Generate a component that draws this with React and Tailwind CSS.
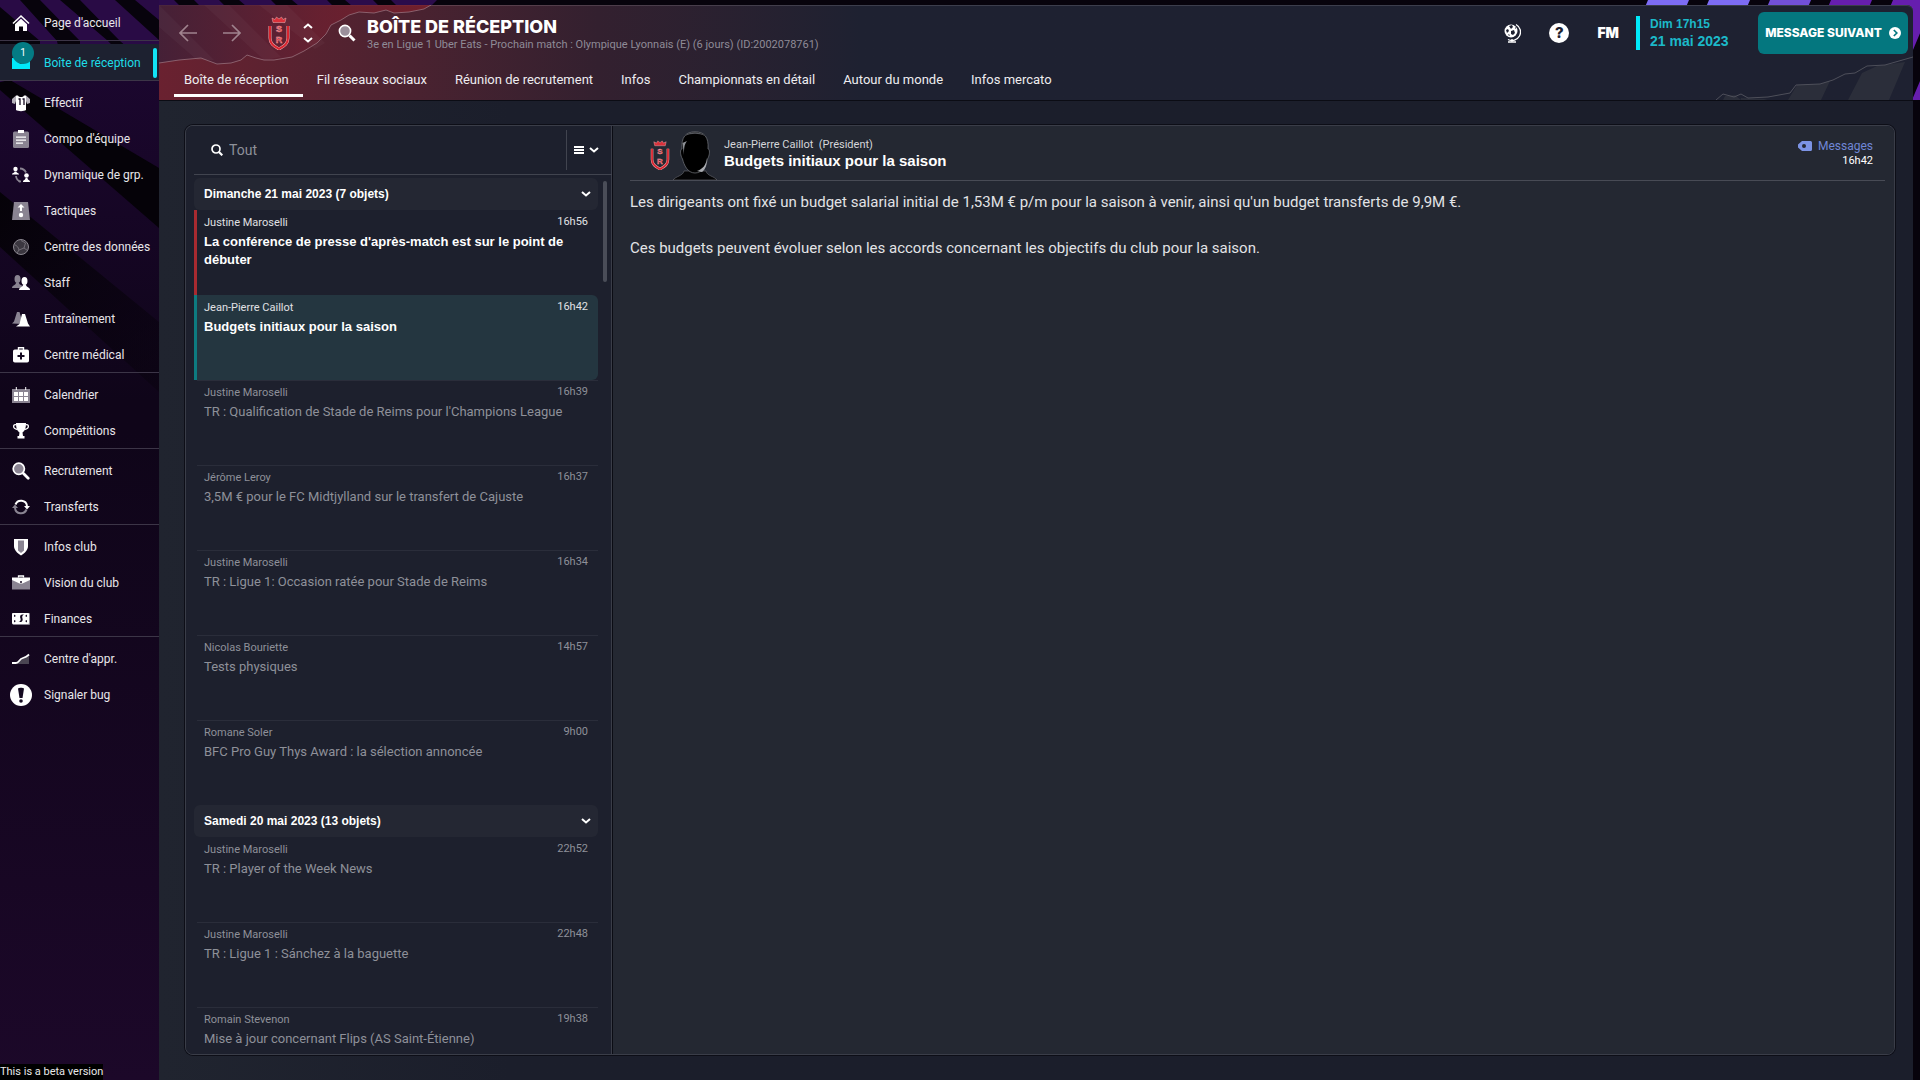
import React, { useState } from 'react';

// ==========================================
// DONNÉES
// ==========================================
const MENU = [
    [{ label: "Page d'accueil", icon: 'home' }],
    [{ label: 'Boîte de réception', icon: 'inbox', badge: 1 }],
    [
        { label: 'Effectif', icon: 'shirt' },
        { label: "Compo d'équipe", icon: 'clipboard' },
        { label: 'Dynamique de grp.', icon: 'dynamics' },
        { label: 'Tactiques', icon: 'tactics' },
        { label: 'Centre des données', icon: 'ball' },
        { label: 'Staff', icon: 'staff' },
        { label: 'Entraînement', icon: 'cones' },
        { label: 'Centre médical', icon: 'medical' },
    ],
    [
        { label: 'Calendrier', icon: 'calendar' },
        { label: 'Compétitions', icon: 'trophy' },
    ],
    [
        { label: 'Recrutement', icon: 'search' },
        { label: 'Transferts', icon: 'transfer' },
    ],
    [
        { label: 'Infos club', icon: 'shield' },
        { label: 'Vision du club', icon: 'briefcase' },
        { label: 'Finances', icon: 'money' },
    ],
    [
        { label: "Centre d'appr.", icon: 'trend' },
        { label: 'Signaler bug', icon: 'bug' },
    ],
];

const TABS = [
    'Boîte de réception',
    'Fil réseaux sociaux',
    'Réunion de recrutement',
    'Infos',
    'Championnats en détail',
    'Autour du monde',
    'Infos mercato',
];

const GROUPS = [
    {
        title: 'Dimanche 21 mai 2023 (7 objets)',
        items: [
            { id: 1, from: 'Justine Maroselli', time: '16h56', subject: "La conférence de presse d'après-match est sur le point de débuter", unread: true, urgent: true },
            { id: 2, from: 'Jean-Pierre Caillot', time: '16h42', subject: 'Budgets initiaux pour la saison', unread: true },
            { id: 3, from: 'Justine Maroselli', time: '16h39', subject: "TR : Qualification de Stade de Reims pour l'Champions League" },
            { id: 4, from: 'Jérôme Leroy', time: '16h37', subject: '3,5M € pour le FC Midtjylland sur le transfert de Cajuste' },
            { id: 5, from: 'Justine Maroselli', time: '16h34', subject: 'TR : Ligue 1: Occasion ratée pour Stade de Reims' },
            { id: 6, from: 'Nicolas Bouriette', time: '14h57', subject: 'Tests physiques' },
            { id: 7, from: 'Romane Soler', time: '9h00', subject: 'BFC Pro Guy Thys Award : la sélection annoncée' },
        ],
    },
    {
        title: 'Samedi 20 mai 2023 (13 objets)',
        items: [
            { id: 8, from: 'Justine Maroselli', time: '22h52', subject: 'TR : Player of the Week News' },
            { id: 9, from: 'Justine Maroselli', time: '22h48', subject: 'TR : Ligue 1 : Sánchez à la baguette' },
            { id: 10, from: 'Romain Stevenon', time: '19h38', subject: 'Mise à jour concernant Flips (AS Saint-Étienne)' },
        ],
    },
];

// ==========================================
// ICÔNES
// ==========================================
const G = '#8a8492';

const ICONS = {
    home: (
        <>
            <path d="M1 9.5 9 2l8 7.5" fill="none" stroke="#fff" strokeWidth="1.6" />
            <path d="M3 10.2 9 4.8l6 5.4V17h-4v-4.5H7V17H3z" fill="#fff" />
        </>
    ),
    inbox: <path d="M0 4h4.5l1.5 4.5 3 1.5 3-1.5L13.500 4H18v11H0z" fill="#00e9fa" />,
    shirt: (
        <>
            <path d="M4 1.500 0 5v4l3 1 1-3zM14 1.500 18 5v4l-3 1-1-3z" fill="#b5b0ba" />
            <path d="M4 1.500h2c1 2 5 2 6 0h2V16c-2 1.500-8 1.500-10 0z" fill="#fff" />
            <path d="M6.500 5h1.500v6M10.500 5H12v6" fill="none" stroke="#140920" strokeWidth="1.300" />
        </>
    ),
    clipboard: (
        <>
            <rect x="1" y="1.500" width="16" height="16.500" rx="1.500" fill={G} />
            <path d="M6 0h6v3H6zM4 6.500h10v1.200H4zM4 9.500h10v1.200H4zM4 12.500h7v1.200H4z" fill="#fff" />
        </>
    ),
    dynamics: (
        <>
            <path d="M8 2.500a7 7 0 0 1 6 4M6.500 14.500 8 16M4 10a6 6 0 0 0 5 5.500" fill="none" stroke={G} strokeWidth="1.800" />
            <circle cx="3.500" cy="3" r="2.200" fill="#fff" />
            <path d="M0 8.500c0-2 2.500-1 2.500-3h2c0 2 2.500 1 2.500 3z" fill="#fff" />
            <circle cx="14.500" cy="9.500" r="2.300" fill="#fff" />
            <path d="M11 16c0-2.500 2.500-1.500 2.500-4h2c0 2.500 2.500 1.500 2.500 4z" fill="#fff" />
        </>
    ),
    tactics: (
        <>
            <path d="M2 0h14l2 18H0z" fill={G} />
            <path d="M9 2 5.500 5.500H8V9h2V5.500h2.500z" fill="#fff" />
            <circle cx="9" cy="13" r="2.200" fill="#fff" />
        </>
    ),
    ball: (
        <>
            <circle cx="9" cy="9" r="7.500" fill="#3b3740" stroke="#8b8790" strokeWidth="1" />
            <path d="M2.500 6.500C5 8 6.500 9 7 12l-2 3M7 12l5-2 1.500-5L9 2.500M12 10l3.500 2.500" fill="none" stroke="#77737c" strokeWidth="0.900" />
        </>
    ),
    staff: (
        <>
            <ellipse cx="5.500" cy="5" rx="3" ry="4" fill={G} />
            <path d="M0 14c0-3.500 4-2 4-5.500h3c0 3 4 2 4 5.500z" fill={G} />
            <ellipse cx="12.500" cy="7" rx="3" ry="4" fill="#fff" />
            <path d="M7 16c0-3.500 4-2 4-5.500h3c0 3.500 4 2 4 5.500z" fill="#fff" />
        </>
    ),
    cones: (
        <>
            <path d="M0 13.500 2 11.500 5 2h2.500L11 14z" fill={G} />
            <path d="M4 16.500 7.500 14 10 4h3l3 9.500 2 3z" fill="#fff" />
        </>
    ),
    medical: (
        <>
            <rect x="1" y="3.500" width="16" height="13" rx="1.800" fill="#fff" />
            <path d="M6.500 4V1.800h5V4" fill="none" stroke="#fff" strokeWidth="1.400" />
            <path d="M9 6.500v7M5.500 10h7" stroke="#140920" strokeWidth="2" />
        </>
    ),
    calendar: (
        <>
            <path d="M0 3h18v14H0z" fill={G} />
            <path d="M3.800 1h1v3h-1zM13.200 1h1v3h-1zM2 6h4v4H2zM7 6h4v4H7zM12 6h4v4h-4zM2 11h4v4H2zM7 11h4v4H7zM12 11h4v4h-4z" fill="#fff" />
        </>
    ),
    trophy: (
        <>
            <path d="M4 1h10c0 5-1 8-3.500 9.500L11 14h1.500v2.500h-7V14H7l.5-3.500C5 9 4 6 4 1z" fill="#fff" />
            <path d="M4.500 2.800C1 1.500 0 6.500 5.500 7.500M13.500 2.800C17 1.500 18 6.500 12.500 7.500" fill="none" stroke="#fff" strokeWidth="1.300" />
        </>
    ),
    search: (
        <>
            <circle cx="6.800" cy="6.800" r="5.600" fill={G} stroke="#fff" strokeWidth="1.700" />
            <path d="m11.500 11.500 4.700 4.700" stroke="#fff" strokeWidth="2.800" strokeLinecap="round" />
        </>
    ),
    transfer: (
        <>
            <path d="M3.500 6.500A6 6 0 0 1 15 8" fill="none" stroke="#fff" strokeWidth="2" />
            <path d="M12 8h6l-3 3.500z" fill="#fff" />
            <path d="M14.500 11.500A6 6 0 0 1 3 10" fill="none" stroke={G} strokeWidth="2" />
            <path d="M0 10h6L3 6.500z" fill={G} />
        </>
    ),
    shield: (
        <>
            <path d="M2 1h14v7c0 4-3 7-7 9.500C5 15 2 12 2 8z" fill="#fff" />
            <path d="M6 2.500h6v10L9 15l-3-2.500z" fill={G} />
        </>
    ),
    briefcase: (
        <>
            <path d="M0 6h18v9.500H0z" fill={G} />
            <path d="M0 3.500h18V6L10.500 9.500h-3L0 6z" fill="#fff" />
            <path d="M6.500 3.500V2h5v1.500" fill="none" stroke="#fff" strokeWidth="1.300" />
            <circle cx="9" cy="8" r="1" fill="#140920" />
        </>
    ),
    money: (
        <>
            <rect x="0.500" y="3" width="17.500" height="12" rx="1" fill={G} />
            <rect x="0" y="3" width="17" height="11" rx="1" fill="#fff" />
            <path d="M2 4.500 4 6l-2 1zM2 12.500 4 11l-2-1zM15 4.500 13 6l2 1zM15 12.500 13 11l2-1zM10.500 4.500c-3 0-2.500 3-2 4s0 3-2 3.500h2c2 0 2.500-2 2-3.500s-.5-3 1.500-4z" fill="#140920" />
        </>
    ),
    trend: (
        <>
            <path d="m5 13 5-5 7-2.500V14H5z" fill="#4a4552" />
            <path d="M0 13h4c3 0 3-4 7-5s4-1.500 6-3.500" fill="none" stroke="#fff" strokeWidth="1.800" />
        </>
    ),
};

const MenuIcon = ({ name }) => {
    if (name === 'bug') {
        return (
            <svg viewBox="0 0 22 22" className="h-[22px] w-[22px] shrink-0" aria-hidden="true">
                <circle cx="11" cy="11" r="11" fill="#fff" />
                <path d="M8 4.500c1-1 5-1 6 0L12.500 14h-3z" fill="#140920" />
                <circle cx="11" cy="17" r="1.800" fill="#140920" />
            </svg>
        );
    }
    return <svg viewBox="0 0 18 18" className="h-[18px] w-[18px]" aria-hidden="true">{ICONS[name]}</svg>;
};

const Crest = ({ className }) => (
    <svg viewBox="0 0 22 34" className={className} aria-hidden="true">
        <path d="M5 6.500 4 2l3 1.500L8.500 1 11 3l2.500-2L15 3.500 18 2l-1 4.500z" fill="#d9303a" stroke="#efb4b7" strokeWidth="0.500" />
        <path d="M2 10v12c0 6 4 8 9 11 5-3 9-5 9-11V10" fill="none" stroke="#e9a9ad" strokeWidth="3" />
        <path d="M2 10v12c0 6 4 8 9 11 5-3 9-5 9-11V10" fill="none" stroke="#d9252f" strokeWidth="2" />
        <text x="11" y="16" textAnchor="middle" fontSize="9" fill="#e5323c" stroke="#f0b9bc" strokeWidth="0.400" className="font-['Liberation_Sans',sans-serif] font-bold">S</text>
        <text x="11" y="27" textAnchor="middle" fontSize="9" fill="#e5323c" stroke="#f0b9bc" strokeWidth="0.400" className="font-['Liberation_Sans',sans-serif] font-bold">R</text>
    </svg>
);

const Portrait = () => (
    <svg viewBox="0 0 44 49" className="h-[49px] w-[44px]" aria-hidden="true">
        <path d="M0 49c3-4 10-4 11-9h22c1 5 8 5 11 9z" fill="#040405" stroke="#6b6d74" strokeWidth="0.600" />
        <path d="M9 18C8 6 13 .8 22 .8S36 6 35 18c2 0 2 6-.5 10-1 6-5 14-12.500 14S11 34 9.500 28C7 24 7 18 9 18z" fill="#000" stroke="#777a80" strokeWidth="0.700" />
        <path d="M9.500 12 14 10c-3 4-3 8-3 14z" fill="#8d9096" />
        <path d="M34 27c-1 7-4 11-10 13l5 1c4-3 5-8 5-14z" fill="#a9abb0" />
        <path d="M12 5c4-5 15-5 20 0-6-3-14-3-20 0z" fill="#55575d" />
    </svg>
);

const Chevron = ({ up }) => (
    <svg viewBox="0 0 10 6" className="h-1.5 w-2.5" aria-hidden="true">
        <path d={up ? 'M1 5l4-3.500L9 5' : 'M1 1l4 3.500L9 1'} fill="none" stroke="#fff" strokeWidth="2" />
    </svg>
);

// ==========================================
// FONDS
// ==========================================
const SideBackground = () => (
    <svg viewBox="0 0 159 400" className="pointer-events-none absolute left-0 top-0 h-[400px] w-[159px]" aria-hidden="true">
        <defs>
            <linearGradient id="fade" x1="0" y1="0" x2="0" y2="1">
                <stop offset="0" stopColor="#1e0733" />
                <stop offset="1" stopColor="#0f0519" />
            </linearGradient>
            <linearGradient id="band" x1="0" y1="0" x2="1" y2="1">
                <stop offset="0" stopColor="#050208" />
                <stop offset="1" stopColor="#050208" stopOpacity="0.300" />
            </linearGradient>
        </defs>
        <path d="M0 0h159v400H0z" fill="url(#fade)" />
        <path d="M0 0h159v50L80 80 0 82z" fill="#290b45" />
        <path d="M0 7 40 41v40H22L0 62zM20 0h20l40 41v40H66L57 41zM60 0h20l40 41 39 34v5h-14l-37-39zM115 0h20l24 20v20z" fill="#07030c" />
        <path d="M0 82 10 80l149 88v60L0 90z" fill="#050208" />
        <path d="M0 192l159 130v70L0 247z" fill="url(#band)" />
    </svg>
);

const TopBackground = () => (
    <>
        <svg viewBox="0 0 280 6" className="pointer-events-none absolute left-[159px] top-0 h-1.5 w-[280px]" aria-hidden="true">
            <path d="M0 0h15l6 6H0zM35 0h25l6 6H41zM80 0h32l6 6H87zM133 0h35l6 6h-34zM186 0h28l6 6h-27zM232 0h46l-6 6h-34z" fill="#2b0c4b" />
        </svg>
        <svg viewBox="0 0 300 100" className="pointer-events-none absolute right-0 top-0 h-[100px] w-[300px]" aria-hidden="true">
            <path d="M28 0h41l-42 100h-41zM89 0h41L88 100H47z" fill="#7d6cf4" />
            <path d="M150 0h41l-42 100h-41z" fill="#7250d8" />
            <path d="M211 0h41l-42 100h-41zM273 0h41l-42 100h-41zM334 0h41l-42 100h-41z" fill="#661eae" />
        </svg>
    </>
);

const HeaderBackground = () => (
    <>
        <svg viewBox="0 0 280 95" className="pointer-events-none absolute left-0 top-0 h-[95px] w-[280px]" aria-hidden="true">
            <defs>
                <linearGradient id="torn" x1="0" y1="0" x2="1" y2="0">
                    <stop offset="0" stopColor="#3c2038" stopOpacity="0.800" />
                    <stop offset="0.600" stopColor="#6b2030" stopOpacity="0.800" />
                    <stop offset="1" stopColor="#7c1f2b" stopOpacity="0.800" />
                </linearGradient>
            </defs>
            <path d="M0 58l20-3 22-2 16 6 14-1 10-3 6-5 9 3 8 2h10l18-3 12-6 13-8 9-9 5-9 10-5 8-5 10-3 15 1 12-3 8 3 15-1 15-3 7-4H0z" fill="url(#torn)" />
            <path d="M0 0l55 55H38L0 22zM45 0h25l52 52-17 3zM100 0h28l38 38-10 6z" fill="#fff" fillOpacity="0.030" />
            <path d="M0 58l20-3 22-2 16 6 14-1 10-3 6-5 9 3 8 2h10l18-3 12-6 13-8 9-9 5-9 10-5 8-5 10-3 15 1 12-3 8 3 15-1 15-3 7-4" fill="none" stroke="#a5848f" strokeOpacity="0.700" strokeWidth="0.900" />
        </svg>
        <svg viewBox="0 0 200 45" className="pointer-events-none absolute bottom-0 right-0 h-[45px] w-[200px]" aria-hidden="true">
            <path d="M10 45l2-4 10-1 6 5zM28 43l27 1-4 1H28zM75 45l9-15 23-1 10-3-9 19zM135 45l14-27 15-7 28-4-16 38z" fill="#2b2e3a" />
            <path d="M3 45l7-6 11 3 7-3 7 4 20-1 22-4 6-8 24-1 13-4 12-6 10-1 12-7 18-1 28-8" fill="none" stroke="#53555f" strokeWidth="0.900" />
        </svg>
    </>
);

// ==========================================
// COMPOSANTS
// ==========================================
const Sidebar = () => (
    <aside className="relative w-[159px] shrink-0 bg-linear-to-b from-[#0f0519] from-40% to-[#1c0829]">
        <SideBackground />
        <nav className="relative">
            {MENU.map((section, i) => (
                <ul key={i} className={`pt-[3px] border-t ${i === 0 ? 'border-transparent' : 'border-[#3c3547]'}`}>
                    {section.map(item => {
                        const active = item.icon === 'inbox';
                        return (
                            <li key={item.label}>
                                <a
                                    href="#"
                                    aria-current={active ? 'page' : undefined}
                                    className={`flex h-9 items-center pt-0.5 text-xs leading-4 ${active ? 'bg-[#1d2130] text-[#1fdde8]' : 'text-[#e8e6ea]'}`}
                                >
                                    <span className="relative flex w-11 shrink-0 items-center pl-3">
                                        <span className={item.icon === 'bug' ? '-ml-0.5' : ''}><MenuIcon name={item.icon} /></span>
                                        {item.badge && (
                                            <span className="absolute -top-3 left-3 flex h-[22px] w-[22px] items-center justify-center rounded-full bg-[#047b84] text-[10px] text-white">
                                                {item.badge}
                                            </span>
                                        )}
                                    </span>
                                    <span className="grow whitespace-nowrap">{item.label}</span>
                                    {active && <span className="mr-0.5 h-[30px] w-1 rounded-sm bg-[#12e4f5]"></span>}
                                </a>
                            </li>
                        );
                    })}
                </ul>
            ))}
        </nav>
        <p className="absolute bottom-0 left-0 bg-black text-[11px] leading-4 text-[#e8e8e8] whitespace-nowrap">This is a beta version</p>
    </aside>
);

const Header = () => (
    <header className="relative flex h-[96px] shrink-0 flex-col justify-between overflow-hidden rounded-tr-md border-b border-[#0b0c14] bg-linear-to-r from-[#6a2130] via-[#33202f] via-25% to-[#1e2131] to-40% pb-[3px] shadow-[inset_0_1px_0_#ffffff22]">
        <HeaderBackground />
        <div className="relative flex h-12 shrink-0 items-center pl-5 pr-[5px] pt-2">
            <button type="button" aria-label="Précédent">
                <svg viewBox="0 0 18 18" className="h-[18px] w-[18px]"><path d="M9 1 1 9l8 8M1 9h17" fill="none" stroke="#a0838e" strokeWidth="1.700" /></svg>
            </button>
            <button type="button" aria-label="Suivant" className="ml-[26px]">
                <svg viewBox="0 0 18 18" className="h-[18px] w-[18px]"><path d="m9 1 8 8-8 8M17 9H0" fill="none" stroke="#a0838e" strokeWidth="1.700" /></svg>
            </button>
            <Crest className="ml-[27px] h-[34px] w-[22px]" />
            <button type="button" aria-label="Changer de club" className="ml-[13px] flex flex-col gap-2">
                <Chevron up />
                <Chevron />
            </button>
            <button type="button" aria-label="Rechercher" className="ml-[25px]">
                <svg viewBox="0 0 18 18" className="h-[18px] w-[18px]">
                    <circle cx="7" cy="7" r="5.600" fill="#9b8f9b" stroke="#fff" strokeWidth="1.600" />
                    <path d="m11.500 11.500 5 5" stroke="#fff" strokeWidth="3" />
                </svg>
            </button>
            <div className="ml-[11px] grow pt-1">
                <h1 className="font-['Inter',sans-serif] text-lg font-extrabold leading-5 text-white">BOÎTE DE RÉCEPTION</h1>
                <p className="text-[11px] leading-4 text-[#8f8b97]">3e en Ligue 1 Uber Eats - Prochain match : Olympique Lyonnais (E) (6 jours) (ID:2002078761)</p>
            </div>
            <button type="button" aria-label="Monde">
                <svg viewBox="0 0 18 20" className="h-5 w-[18px]">
                    <circle cx="8" cy="8" r="6.500" fill="#fff" />
                    <path d="M6 3l3-1 1 2-2 2zM3 7l2-1 1 2-2 2zM8 8l3-1 1 3-2 2-2-1zM12 4l1 1-1 1zM5 11l2 1-1 1z" fill="#1e2131" />
                    <path d="M13 1.500A8.500 8.500 0 0 1 5 16.500M9 16v3M5 19h8" fill="none" stroke="#fff" strokeWidth="1.300" />
                </svg>
            </button>
            <button type="button" aria-label="Aide" className="ml-7 flex h-5 w-5 items-center justify-center rounded-full bg-white font-['Inter',sans-serif] text-[15px] font-extrabold leading-5 text-[#1e2131]">?</button>
            <button type="button" className="ml-7 font-['Inter',sans-serif] text-sm font-black leading-5 text-white">FM</button>
            <div className="ml-[17px] flex h-[34px] items-center border-l-4 border-[#00e9fa] pl-2.5">
                <div className="w-[78px] whitespace-nowrap font-['Liberation_Sans',sans-serif] font-bold text-[#1cb9c9]">
                    <p className="text-xs leading-4">Dim 17h15</p>
                    <p className="text-sm leading-[18px]">21 mai 2023</p>
                </div>
            </div>
            <button type="button" className="ml-[30px] flex h-[42px] w-[150px] items-center justify-center gap-[7px] rounded-md bg-[#04777f] font-['Inter',sans-serif] text-xs font-extrabold whitespace-nowrap text-white">
                MESSAGE SUIVANT
                <svg viewBox="0 0 12 12" className="h-3 w-3 shrink-0" aria-hidden="true">
                    <circle cx="6" cy="6" r="6" fill="#fff" />
                    <path d="m4.800 3 3 3-3 3" fill="none" stroke="#04777f" strokeWidth="1.700" />
                </svg>
            </button>
        </div>
        <nav className="relative flex gap-1 pl-[15px]">
            {TABS.map((tab, i) => (
                <a
                    key={tab}
                    href="#"
                    aria-current={i === 0 ? 'page' : undefined}
                    className={`whitespace-nowrap pl-2.5 pr-3.5 text-[13px] leading-[18px] text-[#eeedf0] pb-[5px] border-b-3 ${i === 0 ? 'border-white' : 'border-transparent'}`}
                >
                    {tab}
                </a>
            ))}
        </nav>
    </header>
);

const MessageRow = ({ message, selected, onSelect }) => {
    const edge = selected ? 'border-[#0d7b80] bg-[#243640] rounded-r-md' : message.urgent ? 'border-[#a82a30]' : 'border-transparent';
    const line = message.line ? 'shadow-[inset_0_1px_0_#2a2d3a]' : '';
    return (
        <li>
            <button
                type="button"
                onClick={() => onSelect(message.id)}
                className={`flex h-[85px] w-full items-start border-l-3 pl-[7px] pr-2.5 pt-1 text-left ${edge} ${line}`}
            >
                <span className="min-w-0 grow pt-0.5">
                    <span className={`block text-[11px] leading-[14px] ${message.unread ? 'text-[#e0e1e4]' : 'text-[#8e9099]'}`}>{message.from}</span>
                    <span className={`-mr-6 block pt-[3px] text-[13px] leading-[18px] ${message.unread ? "font-['Liberation_Sans',sans-serif] font-bold text-white" : 'text-[#8e9099]'}`}>
                        {message.subject}
                    </span>
                </span>
                <span className={`text-[11px] leading-4 ${message.unread ? 'text-[#e0e1e4]' : 'text-[#8e9099]'}`}>{message.time}</span>
            </button>
        </li>
    );
};

const MessageList = ({ selected, onSelect }) => (
    <section className="flex w-[427px] shrink-0 flex-col border-r border-[#0b0c14] bg-[#1d202d] pl-2 shadow-[inset_-1px_0_0_#3a3d48]">
        <div className="flex h-[49px] shrink-0 items-center border-b border-[#41444f]">
            <label className="flex grow items-center gap-1.5 pl-[17px]">
                <svg viewBox="0 0 12 12" className="h-3 w-3 shrink-0" aria-hidden="true">
                    <circle cx="5" cy="5" r="4" fill="none" stroke="#fff" strokeWidth="1.700" />
                    <path d="m8 8 3.300 3.300" stroke="#fff" strokeWidth="2.200" />
                </svg>
                <input type="text" aria-label="Filtrer les messages" placeholder="Tout" className="w-full bg-transparent text-sm leading-5 text-white outline-none placeholder:text-[#8e9099]" />
            </label>
            <button type="button" aria-label="Options de tri" className="flex h-10 w-[46px] items-center gap-[5px] border-l border-[#41444f] pl-[7px]">
                <svg viewBox="0 0 10 8" className="h-2 w-2.5"><path d="M0 1h10M0 4h10M0 7h10" stroke="#fff" strokeWidth="1.800" /></svg>
                <Chevron />
            </button>
        </div>
        <div className="flex min-h-0 grow pt-[3px]">
            <div className="min-h-0 grow overflow-hidden">
                {GROUPS.map(group => (
                    <div key={group.title}>
                        <button type="button" className="flex h-8 w-full items-center justify-between rounded-md bg-[#242733] pl-2.5 pr-[7px] font-['Liberation_Sans',sans-serif] text-xs font-bold leading-4 text-white">
                            {group.title}
                            <Chevron />
                        </button>
                        <ul>
                            {group.items.map((m, i) => (
                                <MessageRow key={m.id} message={{ ...m, line: i > 0 && !m.unread }} selected={m.id === selected} onSelect={onSelect} />
                            ))}
                        </ul>
                    </div>
                ))}
            </div>
            <div className="ml-[5px] mr-[5px] mt-[3px] h-[101px] w-1 shrink-0 rounded-sm bg-[#4a4d58]"></div>
        </div>
    </section>
);

const MessageDetail = () => (
    <article className="min-w-0 grow bg-[#242832] pl-[17px] pr-[9px]">
        <div className="flex h-[55px] items-end border-b border-[#484b55] pl-5">
            <Crest className="mb-2.5 h-[30px] w-5" />
            <div className="ml-[3px]"><Portrait /></div>
            <div className="ml-[7px] grow self-start pt-2.5">
                <p className="text-[11px] leading-[18px] text-[#d5d6da]">Jean-Pierre Caillot &nbsp;(Président)</p>
                <h2 className="font-['Liberation_Sans',sans-serif] text-[15px] font-bold leading-[14px] text-white">Budgets initiaux pour la saison</h2>
            </div>
            <div className="flex flex-col items-end self-start pr-3 pt-3">
                <a href="#" className="flex items-center gap-1.5 text-xs leading-4 text-[#6f86d6]">
                    <svg viewBox="0 0 14 10" className="h-2.5 w-3.5" aria-hidden="true">
                        <path d="M4 0h8.500A1.500 1.500 0 0 1 14 1.500v7a1.500 1.500 0 0 1-1.500 1.500H4L0 6.500v-3z" fill="#7c93e4" />
                        <circle cx="6" cy="5" r="2" fill="#242832" />
                    </svg>
                    Messages
                </a>
                <time className="text-[11px] leading-[14px] text-white">16h42</time>
            </div>
        </div>
        <div className="flex flex-col gap-[22px] pt-[9px] text-[15px] leading-6 text-[#e2e3e6]">
            <p>Les dirigeants ont fixé un budget salarial initial de 1,53M € p/m pour la saison à venir, ainsi qu'un budget transferts de 9,9M €.</p>
            <p>Ces budgets peuvent évoluer selon les accords concernant les objectifs du club pour la saison.</p>
        </div>
    </article>
);

const App = () => {
    const [selected, setSelected] = useState(2);

    return (
        <div className="relative flex h-screen overflow-hidden bg-[#07030c] font-['Roboto',sans-serif]">
            <TopBackground />
            <Sidebar />
            <main className="relative mr-[7px] mt-[5px] flex min-w-0 grow flex-col bg-linear-to-r from-[#20242f] to-[#1b1e2b] to-20% rounded-tr-md">
                <Header />
                <div className="flex min-h-0 grow pb-[25px] pl-[26px] pr-[18px] pt-6">
                    <div className="flex min-h-0 grow overflow-hidden rounded-lg border border-[#3a3d48] shadow-[0_0_0_1px_#0d0e17]">
                        <MessageList selected={selected} onSelect={setSelected} />
                        <MessageDetail />
                    </div>
                </div>
            </main>
        </div>
    );
};

export default App;
